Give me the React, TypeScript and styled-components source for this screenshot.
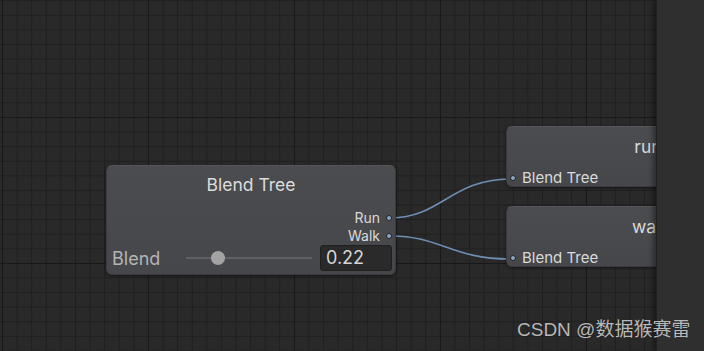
import styled, { createGlobalStyle } from 'styled-components';

const Global = createGlobalStyle`
  html, body { margin: 0; padding: 0; background: #282828; }
  body { font-family: Inter, "Noto Sans", sans-serif; }
`

const Screen = styled.div`
  position: relative;
  display: flex;
  width: 704px;
  height: 351px;
  overflow: hidden;
`

const Canvas = styled.div`
  position: relative;
  flex: 1;
  overflow: hidden;
  background-color: #292929;
  background-image:
    linear-gradient(to right, #191919 1px, transparent 1px),
    linear-gradient(to bottom, #191919 1px, transparent 1px),
    linear-gradient(to right, #1f1f1f 1px, transparent 1px),
    linear-gradient(to bottom, #1f1f1f 1px, transparent 1px);
  background-size: 146px 146px, 146px 146px, 14.6px 14.6px, 14.6px 14.6px;
  background-position: 2px 0, 0 117px, 2px 0, 0 0.2px;
`

const SidePanel = styled.div`
  width: 47px;
  flex-shrink: 0;
  background: #2f2f2f;
  box-shadow: -3px 0 5px rgba(0, 0, 0, 0.4);
  border-left: 1px solid #1f1f1f;
  z-index: 3;
`

const Wires = styled.svg`
  position: absolute;
  left: 0;
  top: 0;
  z-index: 1;
`

const Node = styled.div<{ $x: number; $y: number; $w: number; $h: number }>`
  position: absolute;
  left: ${p => p.$x}px;
  top: ${p => p.$y}px;
  width: ${p => p.$w}px;
  height: ${p => p.$h}px;
  box-sizing: border-box;
  display: flex;
  flex-direction: column;
  background: linear-gradient(#4b4c4f, #46474a);
  border: 1px solid #3a3b3d;
  border-top-color: #56575a;
  border-radius: 6px;
  box-shadow: 0 1px 3px rgba(0, 0, 0, 0.5);
  z-index: 2;
`

const Title = styled.div`
  text-align: center;
  color: #dcdcdc;
  font-size: 17.5px;
  line-height: 20px;
  padding-top: 9px;
`

const Outputs = styled.div`
  display: flex;
  flex-direction: column;
  align-items: flex-end;
  margin-top: 14px;
  padding-right: 3px;
`

const PortRow = styled.div`
  display: flex;
  align-items: center;
  gap: 6px;
  color: #dadada;
  font-size: 14px;
  line-height: 18px;
`

const Dot = styled.span`
  width: 4px;
  height: 4px;
  border-radius: 50%;
  background: #8aa6c4;
  border: 1.5px solid #222;
  box-sizing: content-box;
`

const ParamRow = styled.div`
  display: flex;
  align-items: center;
  padding: 0 3px 0 5px;
`

const ParamLabel = styled.span`
  color: #b4b4b4;
  font-size: 18px;
  width: 74px;
`

const Slider = styled.div`
  position: relative;
  width: 126px;
  height: 2px;
  background: #5f6063;
  margin-right: 8px;
`

const Thumb = styled.span`
  position: absolute;
  top: -6px;
  width: 14px;
  height: 14px;
  margin-left: -7px;
  border-radius: 50%;
  background: #a3a3a3;
`

const ValueField = styled.div`
  width: 72px;
  height: 26px;
  box-sizing: border-box;
  background: #2a2a2a;
  border: 1px solid #1f1f1f;
  border-radius: 3px;
  color: #d6d6d6;
  font-size: 18px;
  line-height: 24px;
  padding-left: 5px;
`

const TargetTitle = styled.div`
  text-align: center;
  color: #dcdcdc;
  font-size: 17.5px;
  line-height: 20px;
  padding-top: 10px;
  flex: 1;
`

const InputRow = styled.div`
  display: flex;
  align-items: center;
  gap: 6px;
  padding-left: 3px;
  color: #dadada;
  font-size: 15px;
  line-height: 16px;
`

const Watermark = styled.div`
  position: absolute;
  left: 517px;
  top: 314px;
  color: rgba(215, 215, 215, 0.85);
  font-family: "Liberation Sans", "Noto Sans CJK SC", sans-serif;
  font-size: 19px;
  z-index: 5;
  text-shadow: 0 0 1px rgba(0, 0, 0, 0.4);
`

const sliderValue = 0.22

export default function App() {
  return (
    <Screen>
      <Global />
      <Canvas>
        <Wires width={660} height={351}>
          <path d="M391 218 C 440 218, 452 179, 510 179" stroke="#6d8fb3" strokeWidth="1.6" fill="none" />
          <path d="M391 236 C 440 236, 452 259, 510 259" stroke="#6d8fb3" strokeWidth="1.6" fill="none" />
        </Wires>

        <Node $x={106} $y={165} $w={290} $h={110}>
          <Title>Blend Tree</Title>
          <Outputs>
            <PortRow>Run<Dot /></PortRow>
            <PortRow>Walk<Dot /></PortRow>
          </Outputs>
          <ParamRow>
            <ParamLabel>Blend</ParamLabel>
            <Slider>
              <Thumb style={{ left: `${sliderValue * 126 + 4}px` }} />
            </Slider>
            <ValueField>0.22</ValueField>
          </ParamRow>
        </Node>

        <Node $x={506} $y={126} $w={284} $h={61}>
          <TargetTitle>run</TargetTitle>
          <InputRow><Dot />Blend Tree</InputRow>
        </Node>

        <Node $x={506} $y={206} $w={290} $h={61}>
          <TargetTitle>walk</TargetTitle>
          <InputRow><Dot />Blend Tree</InputRow>
        </Node>
      </Canvas>
      <SidePanel />
      <Watermark>CSDN @数据猴赛雷</Watermark>
    </Screen>
  )
}
